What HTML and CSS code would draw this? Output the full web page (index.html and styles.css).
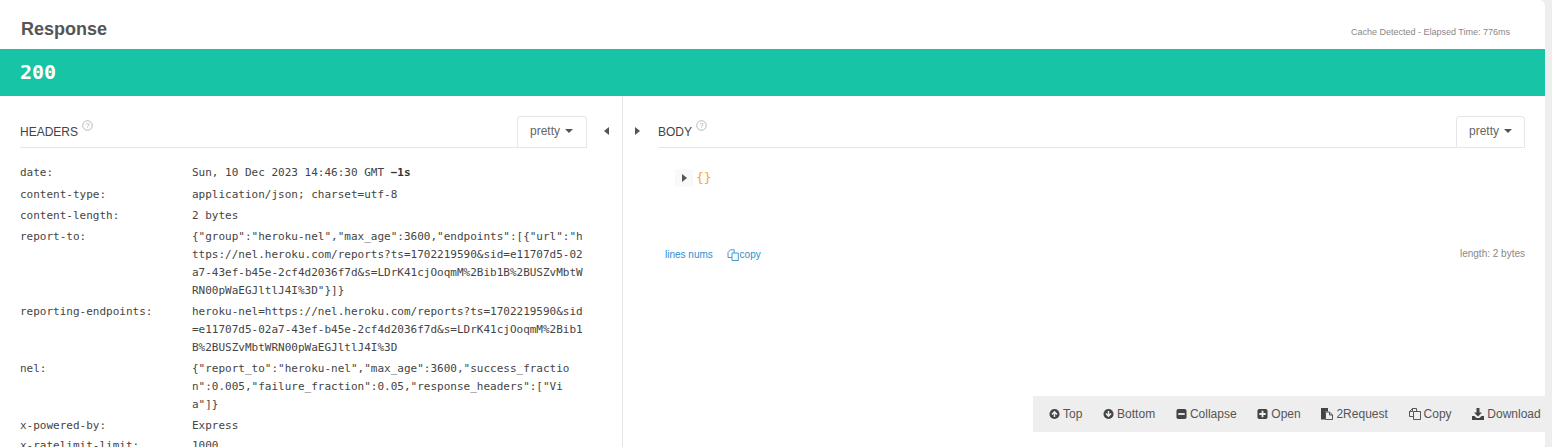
FILE: index.html
```html
<!DOCTYPE html>
<html lang="en">
<head>
<meta charset="utf-8">
<title>Response</title>
<link rel="stylesheet" href="styles.css">
</head>
<body>
<main class="card">
  <header class="top">
    <h2>Response</h2>
    <small>Cache Detected - Elapsed Time: 776ms</small>
  </header>
  <div class="status">200</div>
  <div class="panes">
    <section class="pane left">
      <div class="pane-head">
        <span class="title">HEADERS</span>
        <svg class="help" viewBox="0 0 12 12"><circle cx="6" cy="6" r="5.2"/><text x="6" y="8.6" text-anchor="middle">?</text></svg>
        <div class="select">pretty <i class="caret"></i></div>
      </div>
      <dl class="headers">
        <div class="row"><dt>date:</dt><dd>Sun, 10 Dec 2023 14:46:30 GMT <b>−1s</b></dd></div>
        <div class="row"><dt>content-type:</dt><dd>application/json; charset=utf-8</dd></div>
        <div class="row"><dt>content-length:</dt><dd>2 bytes</dd></div>
        <div class="row"><dt>report-to:</dt><dd>{"group":"heroku-nel","max_age":3600,"endpoints":[{"url":"https://nel.heroku.com/reports?ts=1702219590&amp;sid=e11707d5-02a7-43ef-b45e-2cf4d2036f7d&amp;s=LDrK41cjOoqmM%2Bib1B%2BUSZvMbtWRN00pWaEGJltlJ4I%3D"}]}</dd></div>
        <div class="row"><dt>reporting-endpoints:</dt><dd>heroku-nel=https://nel.heroku.com/reports?ts=1702219590&amp;sid=e11707d5-02a7-43ef-b45e-2cf4d2036f7d&amp;s=LDrK41cjOoqmM%2Bib1B%2BUSZvMbtWRN00pWaEGJltlJ4I%3D</dd></div>
        <div class="row"><dt>nel:</dt><dd>{"report_to":"heroku-nel","max_age":3600,"success_fraction":0.005,"failure_fraction":0.05,"response_headers":["Via"]}</dd></div>
        <div class="row"><dt>x-powered-by:</dt><dd>Express</dd></div>
        <div class="row"><dt>x-ratelimit-limit:</dt><dd>1000</dd></div>
      </dl>
    </section>
    <div class="divider">
      <svg class="arrow arrow-l" viewBox="0 0 5 8"><path d="M5 0v8L0 4z"/></svg>
      <span class="rule"></span>
      <svg class="arrow arrow-r" viewBox="0 0 5 8"><path d="M0 0v8l5-4z"/></svg>
    </div>
    <section class="pane right">
      <div class="pane-head">
        <span class="title">BODY</span>
        <svg class="help" viewBox="0 0 12 12"><circle cx="6" cy="6" r="5.2"/><text x="6" y="8.6" text-anchor="middle">?</text></svg>
        <div class="select">pretty <i class="caret"></i></div>
      </div>
      <div class="json">
        <span class="toggle"><svg viewBox="0 0 5 8"><path d="M0 0v8l5-4z"/></svg></span>
        <span class="braces">{}</span>
      </div>
      <div class="body-foot">
        <span class="links"><a>lines nums</a>
        <a class="copy"><svg viewBox="0 0 12 12"><path d="M5 4h6.300v7.500H5zM5 8.500H1V3.500L3.500.8h3.700V4"/></svg>copy</a></span>
        <span class="len">length: 2 bytes</span>
      </div>
    </section>
  </div>
</main>
<nav class="actions">
  <a><svg viewBox="0 0 12 12"><circle cx="6" cy="6" r="5.5"/><path class="w" d="M6 2.400 9.400 5.900 8.200 7 6.800 5.600V9.400H5.200V5.600L3.800 7 2.600 5.900z"/></svg>Top</a>
  <a><svg viewBox="0 0 12 12"><circle cx="6" cy="6" r="5.5"/><path class="w" d="M6 9.600 2.600 6.100 3.800 5 5.200 6.400V2.600H6.800V6.400L8.200 5 9.400 6.100z"/></svg>Bottom</a>
  <a><svg viewBox="0 0 12 12"><rect x=".5" y=".5" width="11" height="11" rx="2"/><path class="w" d="M2.500 5h7v2h-7z"/></svg>Collapse</a>
  <a><svg viewBox="0 0 12 12"><rect x=".5" y=".5" width="11" height="11" rx="2"/><path class="w" d="M5 2.500h2V5h2.500v2H7v2.500H5V7H2.500V5H5z"/></svg>Open</a>
  <a class="wide"><svg viewBox="0 0 12 12"><path d="M0 0h7v3.500H4v8H0z"/><path class="o" d="M4.500 4h4l3 3v4.500h-7zM8.500 4v3h3"/></svg>2Request</a>
  <a class="wide"><svg viewBox="0 0 12 12"><path class="o" d="M4.500 3.500h7v8h-7zM4.500 8.500h-4V3.500l3-3h4v3M3.500.5v3h-3"/></svg>Copy</a>
  <a class="wide"><svg viewBox="0 0 12 12"><path d="M4.500 0h3v4.500H10L6 8.500 2 4.500h2.500z"/><path d="M0 8h2.500L4.500 10h3l2-2H12v4H0z"/></svg>Download</a>
</nav>
</body>
</html>
```
FILE: styles.css
```css
* { box-sizing: border-box; }
html, body { margin: 0; height: 447px; overflow: hidden; }
body { background: #eee; font-family: "Liberation Sans", Arial, sans-serif; color: #555; }
.card { width: 1545px; height: 447px; background: #fff; border-top-right-radius: 6px; overflow: hidden; }
.top { height: 49px; display: flex; align-items: flex-start; justify-content: space-between; padding: 0 35px 0 21px; }
.top h2 { margin: 19px 0 0; font-size: 18px; line-height: 20px; font-weight: 700; color: #555; }
.top small { margin-top: 26px; font-size: 9px; line-height: 12px; color: #888; }
.status { height: 47px; background: #17c4a5; color: #fff; font: 700 20px/47px "DejaVu Sans Mono", monospace; padding-left: 20px; }
.panes { display: flex; height: 351px; }
.pane-head { display: flex; align-items: flex-start; height: 52px; border-bottom: 1px solid #e6e6e6; position: relative; }
.title { margin-top: 29px; font-size: 12px; line-height: 14px; color: #444; }
.help { width: 11px; height: 11px; margin: 24px 0 0 4px; }
.help circle { fill: none; stroke: #aaa; stroke-width: .9; }
.help text { font: 8px "Liberation Sans", sans-serif; fill: #aaa; }
.select { margin: 20px 0 0 auto; width: 70px; height: 32px; border: 1px solid #e6e6e6; border-bottom: 0; border-radius: 4px 4px 0 0; font-size: 12px; line-height: 29px; color: #666; padding-left: 12px; }
.right .select { width: 69px; }
.caret { display: inline-block; margin-left: 2px; vertical-align: 2px; border: 4px solid transparent; border-top-color: #555; border-bottom: 0; }
.left { width: 587px; padding-left: 20px; flex: none; }
.right { flex: 1; padding-right: 20px; }
.divider { width: 71px; flex: none; display: flex; position: relative; justify-content: center; }
.rule { width: 1px; background: #e6e6e6; }
.arrow { position: absolute; top: 31px; width: 5px; height: 8px; fill: #555; }
.arrow-l { left: 17px; }
.arrow-r { left: 48px; }
.headers { margin: 16px 0 0; font: 11px/18px "DejaVu Sans Mono", monospace; color: #444; }
.row { display: flex; margin-bottom: 3px; }
.row:first-child { margin-bottom: 4px; }
.row:nth-child(7) { margin-bottom: 2px; }
dt { width: 172px; flex: none; }
dd { margin: 0; width: 395px; word-break: break-all; }
dd b { font-weight: 700; color: #333; }
.json { margin: 21px 0 0 17px; height: 18px; display: flex; align-items: center; font: 13px/18px "DejaVu Sans Mono", monospace; }
.toggle { width: 18px; height: 18px; background: #f9f9f9; display: flex; align-items: center; justify-content: center; }
.toggle svg { width: 5px; height: 8px; fill: #555; }
.braces { margin-left: 3px; color: #fba81c; }
.body-foot { margin: 62px 0 0 7px; display: flex; justify-content: space-between; font-size: 10px; line-height: 12px; }
.links a { color: #2a8fd0; }
.copy { margin-left: 11px; }
.copy svg { width: 12px; height: 12px; vertical-align: -3px; margin-right: 1px; fill: none; stroke: #2a8fd0; stroke-width: .9; }
.len { color: #888; position: relative; top: -1px; }
.actions { position: fixed; left: 1033px; top: 396px; width: 519px; height: 36px; background: #eee; display: flex; align-items: center; padding-left: 16px; font-size: 12px; color: #555; }
.actions a { display: flex; align-items: center; margin-right: 20.750px; white-space: nowrap; }
.actions svg { width: 11px; height: 12px; margin-right: 3px; fill: #444; }
.actions .wide svg { width: 12px; }
.actions .o { fill: none; stroke: #444; stroke-width: .9; }
.actions .w { fill: #eee; }
```
